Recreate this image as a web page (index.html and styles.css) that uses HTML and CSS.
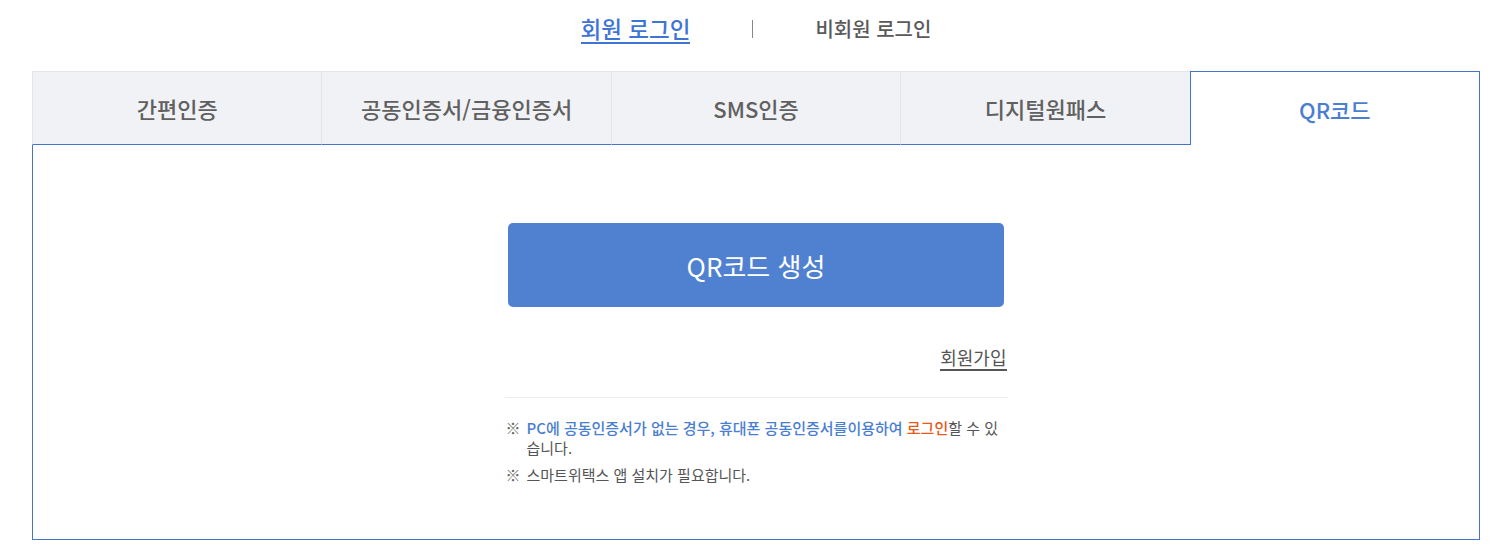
FILE: index.html
```html
<!DOCTYPE html>
<html lang="ko">
<head>
    <meta charset="UTF-8">
    <meta name="viewport" content="width=device-width, initial-scale=1.0">
    <title>QR코드 로그인</title>
    <link rel="stylesheet" href="styles.css">
</head>
<body>
    <div class="wrap">
        <div class="login-type">
            <a class="type-link active" href="#">회원 로그인</a>
            <span class="type-sep"></span>
            <a class="type-link" href="#">비회원 로그인</a>
        </div>

        <ul class="tabs">
            <li class="tab">간편인증</li>
            <li class="tab">공동인증서/금융인증서</li>
            <li class="tab">SMS인증</li>
            <li class="tab">디지털원패스</li>
            <li class="tab active">QR코드</li>
        </ul>

        <div class="panel">
            <div class="panel-inner">
                <button class="qr-btn">QR코드 생성</button>
                <div class="join-row">
                    <a class="join-link" href="#">회원가입</a>
                </div>
                <ul class="notes">
                    <li><span class="mark">※</span><p class="note-text"><b class="blue">PC에 공동인증서가 없는 경우, 휴대폰 공동인증서를이용하여</b> <b class="orange">로그인</b>할 수 있습니다.</p></li>
                    <li><span class="mark">※</span><p class="note-text">스마트위택스 앱 설치가 필요합니다.</p></li>
                </ul>
            </div>
        </div>
    </div>
</body>
</html>
```

FILE: styles.css
```css
:root {
    --blue: #4a7ed0;
    --blue-line: #4374c9;
    --text: #555;
    --tab-bg: #f0f2f6;
    --tab-line: #e3e5e8;
}

* {
    box-sizing: border-box;
}

body {
    margin: 0;
    font-family: 'Noto Sans CJK KR', 'Noto Sans', sans-serif;
    color: var(--text);
    background: #fff;
}

ul {
    margin: 0;
    padding: 0;
    list-style: none;
}

a {
    text-decoration: none;
}

.wrap {
    width: 1448px;
    margin-left: 32px;
}

.login-type {
    display: flex;
    justify-content: center;
    align-items: center;
    height: 71px;
    padding-bottom: 14px;
}

.type-link {
    font-size: 20px;
    font-weight: 500;
    color: #5a5a5a;
    line-height: 26px;
}

.type-link.active {
    font-size: 22.5px;
    color: #3d74d6;
    border-bottom: 2px solid #3d74d6;
    padding-bottom: 1px;
    margin-top: 2px;
}

.type-sep {
    width: 1px;
    height: 18px;
    background: #888;
    margin: 0 62px;
}

.tabs {
    display: flex;
}

.tab {
    flex: 1;
    height: 74px;
    display: flex;
    align-items: center;
    justify-content: center;
    font-size: 22px;
    font-weight: 500;
    color: #606060;
    background: var(--tab-bg);
    border-top: 1px solid var(--tab-line);
    border-left: 1px solid var(--tab-line);
    border-bottom: 1px solid var(--blue-line);
}

.tab.active {
    background: #fff;
    color: var(--blue);
    border: 1px solid var(--blue-line);
    border-bottom: none;
}

.panel {
    border: 1px solid var(--blue-line);
    border-top: none;
    height: 395px;
    padding-top: 78px;
}

.panel-inner {
    width: 503px;
    margin: 0 auto;
}

.qr-btn {
    display: block;
    width: 496px;
    height: 84px;
    margin: 0 auto;
    border: none;
    border-radius: 5px;
    background: #4f81d0;
    color: #fff;
    font-family: inherit;
    font-size: 26px;
    font-weight: 400;
    cursor: pointer;
}

.join-row {
    display: flex;
    justify-content: flex-end;
    align-items: flex-start;
    padding: 38px 1px 0 0;
    border-bottom: 1px solid #ececec;
    height: 91px;
}

.join-link {
    font-size: 18px;
    color: var(--text);
    line-height: 24px;
    border-bottom: 2px solid #555;
}

.notes {
    padding-top: 20px;
    font-size: 15px;
    line-height: 20px;
}

.notes li {
    display: flex;
    margin-bottom: 7px;
}

.mark {
    flex: none;
    width: 22px;
    padding-left: 1px;
    color: #666;
}

.note-text {
    margin: 0;
    flex: 1;
}

.blue {
    color: var(--blue);
    font-weight: 500;
}

.orange {
    color: #e8591a;
    font-weight: 500;
}
```
